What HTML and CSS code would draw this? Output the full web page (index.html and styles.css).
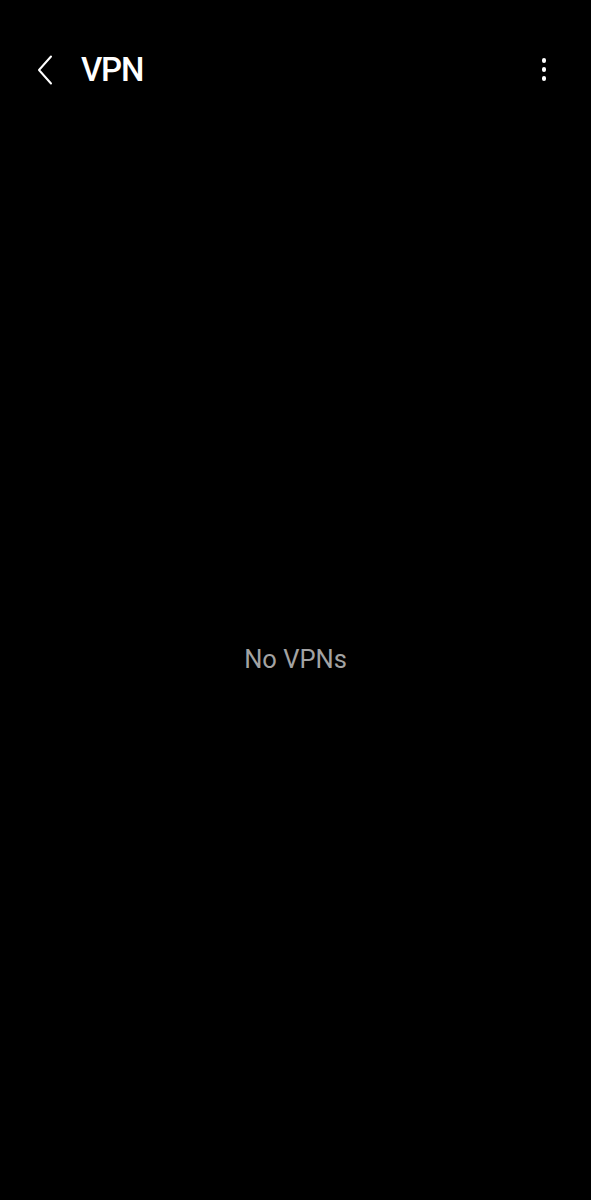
FILE: index.html
```html
<!DOCTYPE html>
<html>
<head>
<meta charset="utf-8">
<link rel="stylesheet" href="styles.css">
</head>
<body>
<div class="screen">
  <header class="appbar">
    <div class="back">
      <svg width="16" height="30" viewBox="0 0 16 30"><path d="M14 1.5 L2 15 L14 28.5" fill="none" stroke="#fff" stroke-width="2" stroke-linecap="round" stroke-linejoin="round"/></svg>
    </div>
    <h1 class="title">VPN</h1>
    <div class="more">
      <span class="dot"></span><span class="dot"></span><span class="dot"></span>
    </div>
  </header>
  <main class="empty">
    <p class="empty-text">No VPNs</p>
  </main>
</div>
</body>
</html>
```
FILE: styles.css
```css
html, body {
  margin: 0;
  padding: 0;
  background: #000;
}
body {
  font-family: Roboto, "Noto Sans", sans-serif;
  color: #fff;
}
.screen {
  width: 591px;
  height: 1200px;
  display: flex;
  flex-direction: column;
}
.appbar {
  height: 140px;
  display: flex;
  align-items: flex-start;
  padding-top: 55px;
  box-sizing: border-box;
  padding-left: 37px;
  padding-right: 45px;
}
.back {
  width: 16px;
  height: 30px;
  margin-right: 28px;
}
.back svg { display: block; }
.title {
  margin: 0;
  font-size: 33px;
  font-weight: 500;
  line-height: 30px;
  letter-spacing: -1.2px;
  flex: 1;
}
.more {
  display: flex;
  flex-direction: column;
  gap: 4.5px;
  padding-top: 3px;
}
.dot {
  width: 4.5px;
  height: 4.5px;
  border-radius: 50%;
  background: #fff;
}
.empty {
  flex: 1;
  display: flex;
  justify-content: center;
}
.empty-text {
  margin: 0;
  margin-top: 501px;
  font-size: 25.5px;
  line-height: 36px;
  color: #a3a3a3;
}
```
